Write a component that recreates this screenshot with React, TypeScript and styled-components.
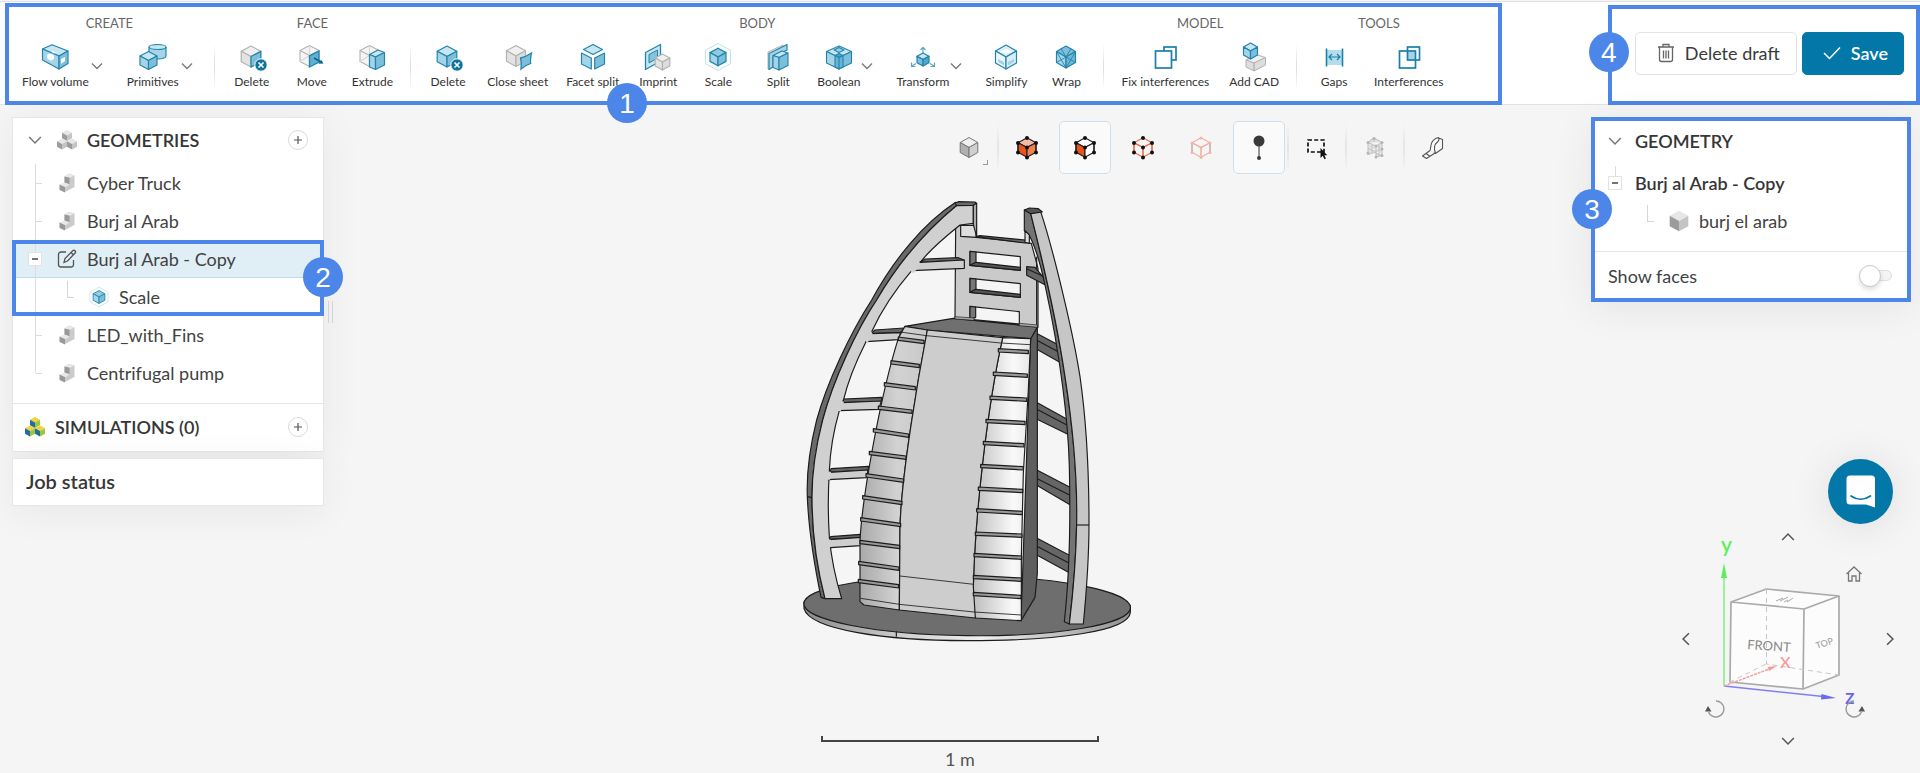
import React from "react";
import styled, { createGlobalStyle } from "styled-components";

const GlobalStyle = createGlobalStyle`
  * { box-sizing: border-box; }
  body {
    margin: 0;
    background: #f5f5f5;
    color: #424242;
    font: 400 18px/24px Lato, "Open Sans", sans-serif;
  }
  button { font: inherit; color: inherit; padding: 0; border: 0; background: none; cursor: pointer; }
  svg { display: block; }
`;

const ACCENT = "#4c86e8";
const BRAND = "#0277a8";

/* ---------- page frame ---------- */

const Page = styled.div`
  min-height: 100vh;
  display: flex;
  flex-direction: column;
`;

const Header = styled.header`
  display: flex;
  justify-content: space-between;
  align-items: flex-end;
  margin-top: 1px;
  padding-top: 1px;
  border-top: 1px solid #e2e2e0;
  background: #fff;
  box-shadow: inset 0 -1px 0 #e2e2e2;
`;

const Main = styled.main`
  flex: 1;
  display: flex;
  align-items: stretch;
  padding: 12px 9px 0 12px;
`;

/* ---------- callouts ---------- */

const Callout = styled.div`
  position: absolute;
  inset: 0;
  border: 4px solid ${ACCENT};
  pointer-events: none;
`;

const SelectionCallout = styled(Callout)`
  inset: 0 -1px;
`;

type Spot = "bottom" | "right" | "left" | "leftMiddle";

const spots: Record<Spot, string> = {
  bottom: "left: 602px; bottom: -18px;",
  right: "right: -20px; top: 17px;",
  left: "left: -19px; top: 72px;",
  leftMiddle: "left: -19px; top: 27px;",
};

const Badge = styled.span<{ $spot: Spot }>`
  position: absolute;
  ${(p) => spots[p.$spot]}
  z-index: 2;
  width: 40px;
  height: 40px;
  border-radius: 50%;
  background: ${ACCENT};
  color: #fff;
  font: 400 28px/41px "Liberation Sans", Arial, sans-serif;
  text-align: center;
`;

/* ---------- tool ribbon ---------- */

const Ribbon = styled.nav`
  position: relative;
  display: flex;
  align-items: stretch;
  height: 102px;
  margin-left: 5px;
  padding: 12px 48px 14px 7px;
`;

const Group = styled.section`
  display: flex;
  flex-direction: column;
  align-items: center;
`;

const GroupTitle = styled.h2`
  margin: 0 0 11px;
  font-size: 13px;
  line-height: 16px;
  font-weight: 400;
  color: #666;
`;

const Tools = styled.div`
  display: flex;
`;

const ToolButton = styled.button<{ $snug?: boolean }>`
  display: flex;
  flex-direction: column;
  align-items: center;
  gap: 2px;
  min-width: 60px;
  padding: 0 ${(p) => (p.$snug ? 9 : 10)}px;
  font-size: 12px;
  line-height: 16px;
  color: #333;
  white-space: nowrap;
`;

const MoreButton = styled.button`
  align-self: flex-start;
  width: 16px;
  height: 16px;
  margin: 16px 12px 0 -10px;
  display: grid;
  place-items: center;
`;

const Divider = styled.span`
  align-self: flex-end;
  width: 1px;
  height: 48px;
  margin: 0 7px;
  background: linear-gradient(#fff, #dcdcdc, #fff);
`;

const Actions = styled.div`
  position: relative;
  display: flex;
  align-items: flex-start;
  gap: 5px;
  height: 100px;
  padding: 27px 16px 0 27px;
`;

const ActionButton = styled.button<{ $primary?: boolean }>`
  display: flex;
  align-items: center;
  gap: 10px;
  height: 43px;
  padding: 0 ${(p) => (p.$primary ? 15 : 16)}px 1px ${(p) => (p.$primary ? 20 : 21)}px;
  border: 1px solid ${(p) => (p.$primary ? BRAND : "#e2e2e6")};
  border-radius: 5px;
  background: ${(p) => (p.$primary ? BRAND : "#fff")};
  color: ${(p) => (p.$primary ? "#fff" : "#3a3a3a")};
  font-weight: ${(p) => (p.$primary ? 600 : 400)};
  white-space: nowrap;
`;

/* ---------- panels ---------- */

const Sidebar = styled.aside`
  display: flex;
  align-items: center;
  align-self: flex-start;
  gap: 4px;
`;

const Cards = styled.div`
  width: 312px;
  display: flex;
  flex-direction: column;
  gap: 6px;
`;

const Card = styled.section`
  background: #fff;
  border: 1px solid #e6e6e6;
  box-shadow: 0 6px 40px rgba(0, 0, 0, 0.06);
`;

const InfoCard = styled.section`
  position: relative;
  width: 320px;
  padding: 0 16px 0 12px;
  background: #fff;
  box-shadow: 0 6px 40px rgba(0, 0, 0, 0.07);
`;

const Handle = styled.div`
  width: 5px;
  height: 22px;
  margin-right: -5px;
  border: solid #d4d4d4;
  border-width: 0 1px;
`;

const HeadRow = styled.div`
  display: flex;
  align-items: center;
  gap: 8px;
  height: 47px;
`;

const SidebarHead = styled(HeadRow)<{ $ruled?: boolean }>`
  height: ${(p) => (p.$ruled ? 48 : 46)}px;
  padding: 0 15px 2px 10px;
  border-top: ${(p) => (p.$ruled ? "1px solid #e2e2e2" : "0")};
`;

const Heading = styled.h3`
  flex: 1;
  margin: 0;
  font-size: 18px;
  line-height: 24px;
  font-weight: 600;
  color: #363636;
`;

const JobStatus = styled.h3`
  margin: 0;
  padding: 10px 13px 12px;
  font-size: 20px;
  line-height: 24px;
  font-weight: 600;
  color: #363636;
`;

const Cell = styled.span`
  width: 24px;
  height: 24px;
  flex: none;
  display: grid;
  place-items: center;
`;

const CellButton = styled(Cell).attrs({ as: "button" })``;

const AddButton = styled.button`
  width: 20px;
  height: 20px;
  display: grid;
  place-items: center;
  border: 1px solid #d9dadf;
  border-radius: 50%;
`;

const Tree = styled.ul`
  margin: 0;
  padding: 0 0 11px;
  list-style: none;
`;

const Branch = styled.div`
  position: relative;
`;

const Row = styled.li<{ $selected?: boolean }>`
  display: flex;
  align-items: center;
  gap: 8px;
  height: 38px;
  padding-left: 10px;
  background: ${(p) => (p.$selected ? "#e0eef5" : "transparent")};
  box-shadow: ${(p) => (p.$selected ? "inset 0 -1px 0 #bcdcea" : "none")};
`;

const InfoRow = styled(Row)`
  padding-left: 0;
`;

const Strong = styled.strong`
  font-weight: 600;
  color: #363636;
`;

type Line = "tee" | "line" | "end" | "stub";

const rail = "linear-gradient(#dcdcdc, #dcdcdc)";
const guides: Record<Line, string> = {
  line: `background: ${rail} 12px 0 / 1px 100% no-repeat;`,
  tee: `background: ${rail} 12px 0 / 1px 100% no-repeat, ${rail} 13px 50% / 6px 1px no-repeat;`,
  end: `background: ${rail} 12px 0 / 1px 50% no-repeat, ${rail} 13px 50% / 6px 1px no-repeat;`,
  stub: `background: ${rail} 12px 2px / 1px 12px no-repeat;`,
};

const Guide = styled.span<{ $line: Line }>`
  width: 24px;
  flex: none;
  align-self: stretch;
  display: grid;
  place-items: center;
  ${(p) => guides[p.$line]}
`;

const Elbow = styled.span`
  width: 7px;
  height: 17px;
  flex: none;
  align-self: flex-start;
  margin: 3px 5px 0 12px;
  border: solid #d6d6d6;
  border-width: 0 0 1px 1px;
`;

const Collapse = styled.button`
  width: 14px;
  height: 14px;
  display: grid;
  place-items: center;
  background: #fff;
  border: 1px solid #e2e2e2;
`;

const SwitchRow = styled.label`
  display: flex;
  align-items: center;
  justify-content: space-between;
  height: 51px;
  margin: 0 -16px 0 -12px;
  padding: 0 19px 2px 17px;
  border-top: 1px solid #e2e2e2;
`;

const Switch = styled.input`
  appearance: none;
  width: 33px;
  height: 22px;
  margin: 0;
  position: relative;

  &::before {
    content: "";
    position: absolute;
    inset: 5px 0 6px 10px;
    border: 1px solid #dedede;
    border-radius: 6px;
    background: #f4f4f4;
  }

  &::after {
    content: "";
    position: absolute;
    inset: 0 11px 0 0;
    border: 1px solid #c8c8c8;
    border-radius: 50%;
    background: #fff;
    box-shadow: 0 3px 5px rgba(0, 0, 0, 0.12);
  }
`;

/* ---------- viewer ---------- */

const Viewer = styled.section`
  flex: 1;
  min-width: 0;
  display: flex;
  flex-direction: column;
  align-items: center;
  padding-left: 1px;
`;

const ViewTools = styled.div`
  align-self: flex-end;
  display: flex;
  gap: 6px;
  margin: 4px 132px 26px 0;
`;

const ViewButton = styled.button<{ $active?: boolean }>`
  position: relative;
  width: 52px;
  height: 53px;
  display: grid;
  place-items: center;
  border: 1px solid ${(p) => (p.$active ? "#cddfec" : "transparent")};
  border-radius: 5px;
  background: ${(p) => (p.$active ? "#fafafb" : "transparent")};
`;

const ViewDivider = styled.span`
  width: 2px;
  margin: 2px -4px;
  background: linear-gradient(#f5f5f5, #e4e4e4, #f5f5f5);
`;

const Corner = styled.span`
  position: absolute;
  right: 6px;
  bottom: 8px;
  width: 5px;
  height: 5px;
  border: solid #999;
  border-width: 0 1px 1px 0;
`;

const ScaleBar = styled.div`
  width: 278px;
  height: 6px;
  margin-top: 94px;
  border: 2px solid #444;
  border-top: 0;
`;

const ScaleLabel = styled.span`
  padding: 5px 0 2px;
  color: #555;
`;

const RightColumn = styled.aside`
  display: flex;
  flex-direction: column;
  align-items: flex-end;
  justify-content: space-between;
  padding-bottom: 22px;
`;

const Corner3D = styled.div`
  display: flex;
  flex-direction: column;
  align-items: flex-end;
  gap: 3px;
  padding-right: 11px;
`;

const ChatButton = styled.button`
  width: 65px;
  height: 65px;
  margin-right: 7px;
  display: grid;
  place-items: center;
  border-radius: 50%;
  background: ${BRAND};
  box-shadow: 0 2px 40px rgba(0, 0, 0, 0.1);
`;

const Orbit = styled.div`
  display: grid;
  grid-template: 20px 54px 76px 54px 20px / 20px 40px 104px 40px 20px;
  place-items: center;
`;

const OrbitDrawing = styled.svg`
  grid-area: 1 / 1 / -1 / -1;
  font-family: Lato, sans-serif;
`;

const OrbitButton = styled.button<{ $row: number; $col: number }>`
  grid-row: ${(p) => p.$row};
  grid-column: ${(p) => p.$col};
  width: 20px;
  height: 20px;
  display: grid;
  place-items: center;
`;

const HomeButton = styled(OrbitButton)`
  width: 28px;
  height: 28px;
  justify-self: start;
`;

const RotateButton = styled(OrbitButton)`
  width: 30px;
  height: 44px;
  align-self: end;
  justify-self: start;
  margin-left: ${(p) => (p.$col === 2 ? 4 : 0)}px;
`;

/* ---------- icon primitives ---------- */

const S = "#2384ad";
const L = "#c6e6f2";
const M = "#a5d4e7";
const D = "#7dbfda";
const G = "#b3b3b3";

interface IsoProps {
  x?: number; y?: number; w?: number; h?: number;
  top?: string; left?: string; right?: string; stroke?: string; sw?: number;
}

const Iso = ({ x = 16, y = 15, w = 10, h = 11, top = L, left = M, right = D, stroke = S, sw = 1.2 }: IsoProps) => {
  const q = h / 2;
  return (
    <g stroke={stroke} strokeWidth={sw} strokeLinejoin="round">
      <path fill={top} d={`M${x} ${y - h}L${x + w} ${y - q}L${x} ${y}L${x - w} ${y - q}Z`} />
      <path fill={left} d={`M${x - w} ${y - q}L${x} ${y}V${y + h}L${x - w} ${y + q}Z`} />
      <path fill={right} d={`M${x + w} ${y - q}L${x} ${y}V${y + h}L${x + w} ${y + q}Z`} />
    </g>
  );
};

const grey = { top: "#f1f0f0", left: "#e4e2e2", right: "#dedcdc", stroke: G };

const CrossBadge = () => (
  <g>
    <circle cx="25" cy="23" r="6.2" fill="#10739c" stroke="#fff" />
    <path d="M22.5 20.5l5 5m0-5l-5 5" stroke="#fff" strokeWidth="1.6" />
  </g>
);

const Ghost = ({ x = 14 }: { x?: number }) => (
  <g fill="none" stroke={G} strokeWidth="1.1" strokeLinejoin="round">
    <path fill="#f6f5f5" d={`M${x} 3.500l9.500 5v11l-9.500 5l-9.500-5v-11z`} />
    <path d={`M${x - 9.5} 8.500l9.500 5l9.500-5M${x} 13.500v11`} />
    <path stroke="#d8d8d8" d={`M${x} 3.500v10M${x - 9.5} 19.500l9.500-6l9.500 6`} />
  </g>
);

const art: Record<string, React.ReactNode> = {
  flow: (
    <g stroke={S} strokeWidth="1.2" strokeLinejoin="round">
      <path fill={L} d="M3.500 7L13 2.700L29 9L20 14Z" />
      <path fill={M} d="M3.500 7L20 14V27L3.500 18Z" />
      <path fill={D} d="M29 9L20 14V27L29 21.500Z" />
      <path d="M12 8.500l6 2-4 1zM8 14a3.500 3 30 1 0 7 2a3.500 3 30 1 0-7-2M22 17l4-2v4l-4 3z" fill="#fff" stroke="none" />
    </g>
  ),
  primitives: (
    <g>
      <path d="M12 5v9c0 4 17 4 17 0V5" fill={M} stroke={S} strokeWidth="1.2" />
      <ellipse cx="20.500" cy="5" rx="8.500" ry="2.500" fill={L} stroke={S} strokeWidth="1.2" />
      <Iso x={11.500} y={18.500} w={8.500} h={9} />
    </g>
  ),
  deleteFace: <g><Iso x={15} y={14.500} w={9.800} h={10.500} {...grey} right={D} /><path d="M15 14.500l9.800-5V20L15 25z" fill={D} stroke={S} strokeWidth="1.2" /><CrossBadge /></g>,
  move: (
    <g>
      <Ghost x={13.500} />
      <path d="M13.500 13.800L23 9v11l-9.500 5z" fill="#5fb0d1" stroke={S} strokeWidth="1.3" />
      <path d="M18 16l8 4.500" stroke="#10638a" strokeWidth="1.6" />
      <path d="M27.500 21.500l-5 .3l2.500-4z" fill="#10638a" />
    </g>
  ),
  extrude: (
    <g strokeLinejoin="round">
      <Ghost x={13.500} />
      <path d="M13.500 12.500L22 8L28.500 10.500L19.500 15Z" fill={L} stroke={S} strokeWidth="1.2" />
      <path d="M13.500 12.500L19.500 15V27.500L13.500 25Z" fill={M} stroke={S} strokeWidth="1.2" />
      <path d="M28.500 10.500L19.500 15V27.500L28.500 23Z" fill={D} stroke={S} strokeWidth="1.2" />
    </g>
  ),
  deleteBody: <g><Iso x={15} y={14.500} w={9.800} h={10.500} /><CrossBadge /></g>,
  closeSheet: <g><Iso x={14} y={14} w={9.500} h={10.500} {...grey} /><path d="M18.500 16q5-1 11-5q-1.500 7-.8 10.500q-6 2-9.700 5.500q1-6-.5-11z" fill={D} stroke={S} strokeWidth="1.300" /></g>,
  facet: (
    <g stroke={S} strokeWidth="1.2" strokeLinejoin="round">
      <path fill={L} d="M16 2.500L25.500 7.500L16 12.500L6.500 7.500Z" />
      <path fill={M} d="M4.500 11L14.300 16V27L4.500 22Z" />
      <path fill={D} d="M27.500 11L17.700 16V27L27.500 22Z" />
    </g>
  ),
  imprint: (
    <g strokeLinejoin="round">
      <path d="M3.500 10.500L18.500 2.500V19L3.500 27.500Z" fill={L} stroke={S} strokeWidth="1.3" />
      <path d="M7 12.500L15.500 8V16L7 21Z" fill="#86c2da" stroke={S} />
      <Iso x={20.500} y={20} w={7.300} h={8} {...grey} />
    </g>
  ),
  scale: <g><path d="M16 1.500l12.500 6.700v13.500L16 28.500L3.500 21.700V8.200z" fill="#fafdfe" stroke="#c3e2ec" /><Iso x={16} y={15} w={8} h={8.800} top="#8fcbe1" /></g>,
  split: (
    <g strokeLinejoin="round">
      <path d="M6 10L21 3V8L10 14V25L6 27Z" fill="#f3f3f3" stroke={G} />
      <path d="M7 11.500L25 2.500V8L11 15V25L7 27.500Z" fill={M} stroke={S} strokeWidth="1.2" />
      <path d="M11 13.500L20 9L26 11L17 15.500Z" fill={L} stroke={S} strokeWidth="1.1" />
      <path d="M11 13.500L17 15.500V28L11 25.500Z" fill={M} stroke={S} strokeWidth="1.1" />
      <path d="M26 11L17 15.500V28L26 23.500Z" fill={D} stroke={S} strokeWidth="1.1" />
    </g>
  ),
  boolean: (
    <g strokeLinejoin="round" stroke={S} strokeWidth="1.1">
      <path fill={L} d="M16 4L28.500 9.500L16 15.500L3.500 9.500Z" />
      <path fill={M} d="M3.500 9.500L16 15.500V27L3.500 21Z" />
      <path fill={D} d="M28.500 9.500L16 15.500V27L28.500 21Z" />
      <path fill="#4ea5c9" d="M12 13.500l4-2l4 2l-4 2z" />
      <path fill="#68b4d2" d="M12 13.500l4 2V27l-4-2zM20 13.500l-4 2V27l4-2z" />
      <path fill="#9ad0e4" d="M11 8l5-2.500L21 8l-5 2.500z" />
    </g>
  ),
  transform: (
    <g>
      <Iso x={16} y={17.500} w={6} h={6.500} top={L} left={D} right="#4fa8cb" />
      <path d="M16 11V5.500m-2.500 2.500L16 5.300L18.500 8M9 21.500l-4 2.500m-.5-3.500v4h4M23 21.500l4 2.500m.5-3.500v4h-4" fill="none" stroke="#5aa6c4" strokeWidth="1.2" />
    </g>
  ),
  simplify: <g><Iso x={16} y={15} w={10.500} h={12} top="#d9eef6" left="#eef8fb" right="#d9eef6" /><path d="M10 9.500l6-2.500l6 2.500L16 12z" fill="#fff" /><path d="M8 20l6 3.500v-3.500L8 17zM24 20l-6 3.500v-3.500l6-3z" fill={M} /></g>,
  wrap: <g><Iso x={16} y={15} w={9.500} h={11} top={D} left={M} right="#6fb7d4" /><path d="M6.500 9.500L16 26M6.500 20.500L16 15M16 15l9.500 5.500M25.500 9.500L16 26M11 6.500l5 8.500l5-8.500" fill="none" stroke={S} strokeWidth=".9" /></g>,
  fix: (
    <g fill="#fff" stroke="#1a80aa" strokeWidth="1.700">
      <rect x="15" y="5" width="12" height="13" /><rect x="6.500" y="9" width="16" height="17" />
    </g>
  ),
  addCad: <g strokeLinejoin="round"><path d="M8 18L18 12.500L27.500 15.500L16 21Z" fill="#f1f0f0" stroke={G} /><path d="M8 18L16 21V29L8 25ZM27.500 15.500L16 21V29L27.500 23Z" fill="#dedcdc" stroke={G} /><Iso x={12.500} y={9} w={7} h={8} /></g>,
  gaps: (
    <g fill="none" stroke="#1a80aa" strokeWidth="1.600">
      <path d="M8.500 8h16v15h-16z" fill="#b5deed" stroke="none" />
      <path d="M8.500 6.500v18M24.500 6.500v18" />
      <path d="M11.500 15h10m-7.500-3l-3 3l3 3m5-6l3 3l-3 3" strokeWidth="1.200" />
    </g>
  ),
  interferences: (
    <g fill="none" stroke="#1a80aa" strokeWidth="1.700">
      <path d="M14.500 9h8v9h-8z" fill={M} stroke="none" />
      <rect x="14.500" y="5" width="12" height="13" /><rect x="6.500" y="9" width="16" height="17" />
    </g>
  ),
};

const ToolArt = ({ name }: { name: string }) => (
  <svg width="32" height="30" viewBox="0 0 32 30" aria-hidden="true">{art[name]}</svg>
);

const Chevron = ({ turn = 0, size = 12, color = "#777" }: { turn?: number; size?: number; color?: string }) => (
  <svg width={size} height={size} viewBox="0 0 12 12" aria-hidden="true">
    <path transform={`rotate(${turn} 6 6)`} d="M1 3.500l5 5l5-5" fill="none" stroke={color} strokeWidth="1.300" />
  </svg>
);

const Plus = () => (
  <svg width="10" height="10" viewBox="0 0 10 10" aria-hidden="true"><path d="M5 1v8M1 5h8" stroke="#555" strokeWidth="1.200" /></svg>
);

const Minus = () => (
  <svg width="8" height="8" viewBox="0 0 8 8" aria-hidden="true"><path d="M1 4h6" stroke="#444" strokeWidth="1.500" /></svg>
);

const blockGrey = { top: "#e6e6e6", left: "#9c9c9c", right: "#c4c4c4", stroke: "none" };
const blockColor = { top: "#f1d33c", left: "#1f6ea3", right: "#9cc63b", stroke: "none" };

const Blocks = ({ color }: { color?: boolean }) => {
  const tone = color ? blockColor : blockGrey;
  return (
    <svg width="22" height="20" viewBox="0 0 22 20" aria-hidden="true">
      <Iso x={11} y={5.500} w={5} h={5.500} {...tone} />
      <Iso x={6} y={14} w={5} h={5.500} {...tone} />
      <Iso x={16} y={14} w={5} h={5.500} {...tone} />
    </svg>
  );
};

const PartIcon = () => (
  <svg width="16" height="20" viewBox="0 0 16 20" aria-hidden="true">
    <path d="M5.500 3.500L10 .800L15.500 2.500V14L6 19V14L10 11.500L5.500 9.500Z" fill="#cbcbcb" />
    <path d="M5.500 3.500L10 .800L15.500 2.500L11 4.800ZM.500 11.500L5.500 9.500L10 11.500L6 14Z" fill="#e8e8e8" />
    <path d="M5.500 3.500L10.500 4.800V11L5.500 9.500ZM.500 11.500L6 14V19.500L.500 17Z" fill="#999" />
  </svg>
);

const EditIcon = () => (
  <svg width="20" height="20" viewBox="0 0 20 20" fill="none" stroke="#555" strokeWidth="1.300" aria-hidden="true">
    <path d="M9 3H4a2.500 2.500 0 0 0-2.500 2.500v10A2.500 2.500 0 0 0 4 18h10a2.500 2.500 0 0 0 2.500-2.500V11" />
    <path d="M7 13.500l1-4L16 1.500q1-.6 2 .3t.3 2L10.500 12zM14 3.500l2.500 2.500" />
  </svg>
);

const TrashIcon = () => (
  <svg width="18" height="20" viewBox="0 0 18 20" fill="none" stroke="#666" strokeWidth="1.300" aria-hidden="true">
    <path d="M1 4h16M6 4V1.500h6V4M2.500 4v12.500q0 2 2 2h9q2 0 2-2V4M6.500 7.500v8M9 7.500v8M11.500 7.500v8" />
  </svg>
);

/* ---------- viewer toolbar icons ---------- */

const hex: [number, number][] = [[11, 1.5], [20, 6.5], [20, 16], [11, 21], [2, 16], [2, 6.5], [11, 11]];

const NodeCube = ({ top = "none", left = "none", right = "none", line = "#222", dot = "#111", soft = false, sides = line }: {
  top?: string; left?: string; right?: string; line?: string; dot?: string; soft?: boolean; sides?: string;
}) => (
  <svg width="22" height="24" viewBox="0 0 22 23" aria-hidden="true">
    <Iso x={11} y={11} w={9} h={9.700} top={top} left={left} right={right} stroke={line} sw={1.1} />
    <path d="M2 6.500v9.500M20 6.500v9.500" stroke={sides} strokeWidth="1.300" />
    {hex.map(([x, y]) => <circle key={`${x}-${y}`} cx={x} cy={y} r={soft ? 1.5 : 2} fill={dot} />)}
  </svg>
);

const SolidCube = () => (
  <svg width="20" height="22" viewBox="0 0 20 22" aria-hidden="true">
    <Iso x={10} y={10.500} w={8.800} h={10} top="#f0f0f0" left="#b0b0b0" right="#cfcfcf" stroke="#777" sw={1} />
  </svg>
);

const PinIcon = () => (
  <svg width="14" height="26" viewBox="0 0 14 26" aria-hidden="true">
    <path d="M7 6v17" stroke="#555" strokeWidth="1.200" /><circle cx="7" cy="6" r="5.500" fill="#3a3a3a" /><circle cx="7" cy="23" r="2" fill="#3a3a3a" />
  </svg>
);

const BoxSelectIcon = () => (
  <svg width="22" height="24" viewBox="0 0 22 24" aria-hidden="true">
    <path d="M2 4h16v12H2z" fill="none" stroke="#111" strokeWidth="1.700" strokeDasharray="4 2.200" />
    <path d="M14.500 12v10l2.200-2.200l1.800 3.400l1.500-.8l-1.700-3.200h3z" fill="#111" />
  </svg>
);

const MeshIcon = () => (
  <svg width="20" height="24" viewBox="0 0 20 24" fill="none" stroke="#c4c4c4" strokeWidth="1.100" aria-hidden="true">
    <path d="M3 6.500l6-4.500l8 4.500v13l-8-3l-6 2zM3 6.500l8 3.500l6-3.500M11 10v11l6-1.500M3 12.500l8 3l6-2M7 8v10M9 2v4M14 8v12" fill="#e2e2e2" />
    {[[9, 2.5], [3, 6.500], [17, 6.500], [11, 10], [3, 17], [17, 13], [11, 21], [17, 19.500]].map(([x, y]) => <circle key={`${x}-${y}`} cx={x} cy={y} r="1.500" fill="#b5b5b5" stroke="none" />)}
  </svg>
);

const TapeIcon = () => (
  <svg width="24" height="24" viewBox="0 0 24 24" fill="#f8f8f8" stroke="#555" strokeWidth="1.100" strokeLinejoin="round" aria-hidden="true">
    <path d="M10.500 7Q13 2.500 17 1.800L21.500 3.500V12.500L14.500 17.500L8.500 15.500Q9.500 14.500 9.500 12Z" />
    <path d="M17 1.800Q20 3 14.500 8Q13 10 13.500 13.500L14.500 17.500" fill="none" />
    <path d="M9 14.500L1.500 20L5.500 22.500L14 17M5 17.500l3.500 2.500" />
  </svg>
);

/* ---------- 3D model ---------- */

const leftRibs = [
  [325, 445, 402, 455], [303, 516, 388, 527], [283, 582, 376, 594], [265, 652, 366, 664],
  [250, 720, 356, 736], [238, 788, 348, 802], [228, 855, 341, 871], [218, 921, 336, 938],
  [212, 987, 332, 1004], [210, 1055, 329, 1070], [206, 1118, 327, 1135], [205, 1172, 326, 1188],
];
const rightRibs = [
  [625, 480, 715, 485], [610, 550, 712, 556], [600, 622, 710, 628], [588, 692, 705, 698],
  [580, 758, 702, 765], [572, 827, 700, 834], [565, 895, 698, 902], [560, 960, 697, 968],
  [556, 1030, 696, 1036], [552, 1094, 695, 1102], [550, 1160, 694, 1168], [550, 1211, 693, 1220],
];

const rib = ([x1, y1, x2, y2]: number[]) => (
  <path key={y1 + "-" + x1} d={`M${x1} ${y1 - 4}L${x2} ${y2 - 4}V${y2 + 6}L${x1} ${y1 + 6}Z`} fill="#999" strokeWidth="3.600" />
);

const Model = () => (
  <svg width="350" height="442" viewBox="-15 30 1050 1326" role="img" aria-label="Burj al Arab model" stroke="#1c1c1c" strokeWidth="3.500" strokeLinejoin="round">
    <defs>
      <linearGradient id="shadeLeft"><stop offset="0" stopColor="#a9a9a9" /><stop offset=".55" stopColor="#d2d2d2" /><stop offset="1" stopColor="#c8c8c8" /></linearGradient>
      <linearGradient id="shadeRight"><stop offset="0" stopColor="#bdbdbd" /><stop offset=".7" stopColor="#fafafa" /><stop offset="1" stopColor="#e6e6e6" /></linearGradient>
      <linearGradient id="rim"><stop offset="0" stopColor="#8a8a8a" /><stop offset=".3" stopColor="#cfcfcf" /><stop offset=".55" stopColor="#f0f0f0" /><stop offset="1" stopColor="#909090" /></linearGradient>
    </defs>
    {/* base disc */}
    <path d="M42 1236V1256C60 1320 290 1352 531 1352C800 1352 1015 1325 1021 1268V1246Z" fill="url(#rim)" />
    <ellipse cx="531.500" cy="1247" rx="490" ry="90" transform="rotate(.7 531 1247)" fill="#6e6e6e" />
    <path d="M319 1324V1340" />
    {/* upper wall */}
    <path fillRule="evenodd" fill="#cacaca" d="M497 112L512 105L558 142L705 157L724 160L744 235V412L495 385ZM540 184V226L691 241V200ZM540 265V307L691 322V281ZM540 349V388L688 402V365Z" />
    <path d="M558 140L570 137L706 150V159Z" fill="#666" />
    <path d="M512 106H558V142L512 139Z" fill="#dedede" />
    {[0, 81].map((dy) => (
      <g key={dy} transform={`translate(0 ${dy})`} fill="#777">
        <path d="M540 184L558 186V217L540 226Z" /><path d="M540 226L558 217L691 232V241Z" fill="#555" />
      </g>
    ))}
    <path d="M540 349L557 351V382L540 388ZM740 200V410" fill="#777" />
    {/* left arch */}
    <path fill="#6a6a6a" d="M497 37C400 100 310 210 245 330C180 430 110 580 80 690C55 790 50 870 52 920C55 1000 72 1120 93 1222L105 1226C80 1130 66 1020 66 920C66 830 80 760 98 690C130 570 200 420 260 330C330 210 410 120 502 45Z" />
    <path fill="#d0d0d0" d="M502 45H550V100L510 105C460 145 420 180 395 212L365 242C315 300 275 360 245 425L228 455C195 520 172 580 160 632L148 662C130 725 120 790 118 843C114 910 114 980 118 1040C124 1110 138 1170 155 1226L105 1226C80 1130 66 1020 66 920C66 830 80 760 98 690C130 570 200 420 260 330C330 210 410 120 502 45Z" />
    <path d="M495 39L505 35L555 36L560 40L550 46L500 47Z" fill="#6a6a6a" />
    <path d="M550 46L560 40V140L550 104Z" fill="#aaa" />
    <path d="M52 920L66 923" />
    <g fill="#666">
      <path d="M390 217L405 207L505 203L522 210Z" /><path d="M243 431L255 420L342 414L334 427Z" /><path d="M157 638L162 627L276 622L274 634Z" />
      <path d="M118 846L124 836L236 829L234 840Z" /><path d="M118 1048L122 1040L212 1033V1043Z" />
    </g>
    <g fill="#cecece">
      <path d="M365 242L390 217L523 210V235Z" /><path d="M228 455L243 431L332 428L325 449Z" /><path d="M148 662L157 638L274 633L266 658Z" />
      <path d="M115 869L118 847L234 840L230 863Z" /><path d="M122 1073L118 1049L212 1042V1067Z" />
    </g>
    <g stroke="none" fill="#d0d0d0">
      <path d="M350 235L380 210L394 222L370 250ZM222 448L240 418L248 432L232 460ZM140 662L150 630L162 636L152 664ZM106 870L108 842L123 846L120 869ZM108 1072L106 1045L122 1049L126 1071Z" />
    </g>
    {/* right braces */}
    <g fill="#666">
      <path d="M710 230L735 232L760 262L766 285L710 256Z" /><path d="M735 440L742 431L800 462L812 518L735 475Z" /><path d="M735 650L742 638L830 687L838 735L735 685Z" />
      <path d="M730 860L742 841L840 892V944L730 880Z" /><path d="M728 1060L740 1044L838 1096V1148L728 1088Z" />
      <path d="M710 236L758 258M735 448L806 486M735 655L832 706M730 860L840 916M728 1062L838 1120" fill="none" />
    </g>
    {/* right arch */}
    <path fill="#747474" d="M703 60L722 70C760 220 800 390 825 560C850 720 862 880 860 1000C858 1120 848 1220 838 1302L823 1295C838 1160 842 1000 838 830C835 700 812 500 765 285C750 215 730 160 720 140L703 122Z" />
    <path fill="#c6c6c6" d="M722 70L752 65C790 180 850 430 870 560C890 700 897 860 897 1000C897 1110 888 1220 880 1302H838C848 1220 858 1120 860 1000C862 880 850 720 825 560C800 390 760 220 722 70Z" />
    <path d="M703 60L718 54L745 56L757 66L722 71Z" fill="#555" />
    <path d="M705 122L718 135V160L705 157Z" fill="#ddd" />
    <path d="M860 1005H897" />
    {/* tower */}
    <path d="M722 445L742 412V1150L735 1222L693 1292Z" fill="#5e5e5e" />
    <path d="M345 409L490 385L742 411L722 446L410 420Z" fill="#707070" />
    <path d="M495 380L552 384V391L495 387ZM688 400L742 405V412L688 407Z" fill="#aaa" strokeWidth="2" />
    <path fill="url(#shadeLeft)" d="M345 409L412 420C385 560 335 850 330 1010L328 1260L222 1245L210 1235V1055C215 930 270 620 325 445Z" />
    <path fill="url(#shadeRight)" d="M638 443L722 446L715 600L700 850L694 1100V1292L558 1284L550 1275V1190C555 980 590 660 638 443Z" />
    <path fill="#cdcdcd" d="M412 420L638 443C590 660 555 980 550 1190L556 1284L328 1260L330 1010C335 850 385 560 412 420Z" />
    <path fill="none" strokeWidth="2.500" d="M330 426L410 437L632 459L720 464M330 1158L552 1183M212 1225L328 1243L552 1266L694 1275" />
    {leftRibs.map(rib)}
    {rightRibs.map(rib)}
  </svg>
);

/* ---------- data ---------- */

interface Tool { label: string; icon: string; more?: boolean }

const groups: { title: string; snug?: boolean; tools: Tool[] }[] = [
  { title: "CREATE", tools: [{ label: "Flow volume", icon: "flow", more: true }, { label: "Primitives", icon: "primitives", more: true }] },
  { title: "FACE", tools: [{ label: "Delete", icon: "deleteFace" }, { label: "Move", icon: "move" }, { label: "Extrude", icon: "extrude" }] },
  {
    title: "BODY",
    snug: true,
    tools: [
      { label: "Delete", icon: "deleteBody" }, { label: "Close sheet", icon: "closeSheet" }, { label: "Facet split", icon: "facet" },
      { label: "Imprint", icon: "imprint" }, { label: "Scale", icon: "scale" }, { label: "Split", icon: "split" },
      { label: "Boolean", icon: "boolean", more: true }, { label: "Transform", icon: "transform", more: true },
      { label: "Simplify", icon: "simplify" }, { label: "Wrap", icon: "wrap" },
    ],
  },
  { title: "MODEL", tools: [{ label: "Fix interferences", icon: "fix" }, { label: "Add CAD", icon: "addCad" }] },
  { title: "TOOLS", tools: [{ label: "Gaps", icon: "gaps" }, { label: "Interferences", icon: "interferences" }] },
];

const PartRow = ({ name, last }: { name: string; last?: boolean }) => (
  <Row><Guide $line={last ? "end" : "tee"} /><Cell><PartIcon /></Cell>{name}</Row>
);

const OrbitCube = () => (
  <OrbitDrawing width="224" height="224" viewBox="0 0 224 224" fill="none" role="img" aria-label="View orientation">
    <g stroke="#aaa" strokeWidth="1.700" strokeLinejoin="round">
      <path d="M90.500 62L55 75L54 155L127 162L163 148V69Z" fill="#fcfcfc" />
      <path d="M55 75L128 82L163 69M128 82L127 162" />
      <path d="M90.500 62V137L163 148M90 137L54 155" stroke="#c6c6c6" strokeWidth="1" strokeDasharray="5 4" />
      <path d="M100 74l7-3m-3 3l8-4m-4 5l4-2m-1 2l6-4" strokeWidth="1" />
    </g>
    <path d="M48 159V45" stroke="#7df07d" strokeWidth="1.500" /><path d="M48 36l3 15h-6z" fill="#5bf05b" />
    <path d="M48 159L152 170" stroke="#7f7ff5" strokeWidth="1.500" /><path d="M160 171l-15 1.500l.5-5.500z" fill="#6a6af5" />
    <path d="M48 159L96 141" stroke="#f5a0a0" strokeWidth="1.500" strokeDasharray="3 1" /><path d="M101 139l-8 5-1.500-4z" fill="#f59a9a" />
    <text x="71" y="122" fontSize="13" fill="#888" transform="rotate(4 71 122)">FRONT</text>
    <text x="141" y="122" fontSize="9" fill="#999" transform="rotate(-18 141 122)">TOP</text>
    <text x="45" y="25" fontSize="21" fontWeight="600" fill="#5bf05b">y</text>
    <text x="104" y="141" fontSize="16" fontWeight="600" fill="#f79a9a">X</text>
    <text x="169" y="177" fontSize="21" fontWeight="600" fill="#6464f0">z</text>
  </OrbitDrawing>
);

const Rotate = ({ flip }: { flip?: boolean }) => (
  <svg width="22" height="22" viewBox="0 0 22 22" aria-hidden="true">
    <g transform={flip ? "matrix(-1 0 0 1 22 0)" : undefined}>
      <path d="M12 3a8 8 0 1 1-7.500 11" fill="none" stroke="#999" strokeWidth="1.400" />
      <path d="M4 8L1 13.500h6.500z" fill="#555" />
    </g>
  </svg>
);

export default function App() {
  return (
    <Page>
      <GlobalStyle />
      <Header>
        <Ribbon aria-label="Geometry operations">
          {groups.map((group, i) => (
            <React.Fragment key={group.title}>
              {i > 0 && <Divider />}
              <Group>
                <GroupTitle>{group.title}</GroupTitle>
                <Tools>
                  {group.tools.map((tool) => (
                    <React.Fragment key={tool.label}>
                      <ToolButton $snug={group.snug}><ToolArt name={tool.icon} />{tool.label}</ToolButton>
                      {tool.more && <MoreButton aria-label={`${tool.label} options`}><Chevron /></MoreButton>}
                    </React.Fragment>
                  ))}
                </Tools>
              </Group>
            </React.Fragment>
          ))}
          <Callout />
          <Badge $spot="bottom">1</Badge>
        </Ribbon>
        <Actions>
          <ActionButton><TrashIcon />Delete draft</ActionButton>
          <ActionButton $primary>
            <svg width="18" height="14" viewBox="0 0 18 14" aria-hidden="true"><path d="M1 7l5.500 5.500L17 1.500" fill="none" stroke="#fff" strokeWidth="1.500" /></svg>
            Save
          </ActionButton>
          <Callout />
          <Badge $spot="leftMiddle">4</Badge>
        </Actions>
      </Header>
      <Main>
        <Sidebar>
          <Cards>
            <Card>
              <SidebarHead>
                <CellButton aria-label="Collapse geometries"><Chevron size={14} /></CellButton>
                <Cell><Blocks /></Cell>
                <Heading>GEOMETRIES</Heading>
                <AddButton aria-label="Add geometry"><Plus /></AddButton>
              </SidebarHead>
              <Tree>
                <PartRow name="Cyber Truck" />
                <PartRow name="Burj al Arab" />
                <Branch>
                  <Row $selected>
                    <Guide $line="line"><Collapse aria-label="Collapse"><Minus /></Collapse></Guide>
                    <Cell><EditIcon /></Cell>
                    Burj al Arab - Copy
                  </Row>
                  <Row>
                    <Guide $line="line" />
                    <Elbow />
                    <Cell><svg width="22" height="22" viewBox="2 0 28 30" aria-hidden="true">{art.scale}</svg></Cell>
                    Scale
                  </Row>
                  <SelectionCallout />
                  <Badge $spot="right">2</Badge>
                </Branch>
                <PartRow name="LED_with_Fins" />
                <PartRow name="Centrifugal pump" last />
              </Tree>
              <SidebarHead $ruled>
                <Cell><Blocks color /></Cell>
                <Heading>SIMULATIONS (0)</Heading>
                <AddButton aria-label="Add simulation"><Plus /></AddButton>
              </SidebarHead>
            </Card>
            <Card><JobStatus>Job status</JobStatus></Card>
          </Cards>
          <Handle />
        </Sidebar>

        <Viewer>
          <ViewTools>
            <ViewButton aria-label="Render mode"><SolidCube /><Corner /></ViewButton>
            <ViewDivider />
            <ViewButton aria-label="Select bodies"><NodeCube top="#f5b9a4" left="#e8541c" right="#f0814f" /></ViewButton>
            <ViewButton $active aria-label="Select faces"><NodeCube top="#fff" left="#e8541c" right="#fff" /></ViewButton>
            <ViewButton aria-label="Select edges"><NodeCube line="#e5704f" /></ViewButton>
            <ViewButton aria-label="Select vertices"><NodeCube line="#f0b0a4" sides="#b5b5b5" dot="#f5b5a8" soft /></ViewButton>
            <ViewButton $active aria-label="Pick"><PinIcon /></ViewButton>
            <ViewDivider />
            <ViewButton aria-label="Box select"><BoxSelectIcon /></ViewButton>
            <ViewDivider />
            <ViewButton aria-label="Mesh"><MeshIcon /></ViewButton>
            <ViewDivider />
            <ViewButton aria-label="Measure"><TapeIcon /></ViewButton>
          </ViewTools>
          <Model />
          <ScaleBar />
          <ScaleLabel>1 m</ScaleLabel>
        </Viewer>

        <RightColumn>
          <InfoCard>
            <HeadRow>
              <CellButton aria-label="Collapse geometry"><Chevron size={14} /></CellButton>
              <Heading>GEOMETRY</Heading>
            </HeadRow>
            <Tree>
              <InfoRow>
                <Guide $line="stub"><Collapse aria-label="Collapse"><Minus /></Collapse></Guide>
                <Strong>Burj al Arab - Copy</Strong>
              </InfoRow>
              <InfoRow>
                <Cell />
                <Elbow />
                <Cell>
                  <svg width="20" height="22" viewBox="0 0 20 22" aria-hidden="true"><Iso x={10} y={11} w={9.300} h={10.300} {...blockGrey} /></svg>
                </Cell>
                burj el arab
              </InfoRow>
            </Tree>
            <SwitchRow htmlFor="show-faces">
              Show faces
              <Switch id="show-faces" type="checkbox" role="switch" />
            </SwitchRow>
            <Callout />
            <Badge $spot="left">3</Badge>
          </InfoCard>
          <Corner3D>
            <ChatButton aria-label="Open chat">
              <svg width="30" height="33" viewBox="0 0 30 33" aria-hidden="true">
                <path d="M4 .500h21.500q3.500 0 3.500 3.500v28.500L20 29.500H4Q.500 29.500.500 26V4Q.500.500 4 .500z" fill="#fff" />
                <path d="M5 21q9.500 6.500 19.500 0" fill="none" stroke={BRAND} strokeWidth="1.700" strokeLinecap="round" />
              </svg>
            </ChatButton>
            <Orbit>
              <OrbitCube />
              <OrbitButton $row={1} $col={3} aria-label="Rotate up"><Chevron turn={180} size={14} color="#555" /></OrbitButton>
              <OrbitButton $row={3} $col={1} aria-label="Rotate left"><Chevron turn={90} size={14} color="#555" /></OrbitButton>
              <OrbitButton $row={3} $col={5} aria-label="Rotate right"><Chevron turn={-90} size={14} color="#555" /></OrbitButton>
              <OrbitButton $row={5} $col={3} aria-label="Rotate down"><Chevron size={14} color="#555" /></OrbitButton>
              <HomeButton $row={2} $col={4} aria-label="Home view">
                <svg width="16" height="16" viewBox="0 0 16 16" fill="none" stroke="#777" strokeWidth="1.300" aria-hidden="true">
                  <path d="M.500 8L8 1l7.500 7M2.500 6.500V15h3.500v-5h4v5h3.500V6.500" />
                </svg>
              </HomeButton>
              <RotateButton $row={4} $col={2} aria-label="Roll left"><Rotate /></RotateButton>
              <RotateButton $row={4} $col={4} aria-label="Roll right"><Rotate flip /></RotateButton>
            </Orbit>
          </Corner3D>
        </RightColumn>
      </Main>
    </Page>
  );
}
